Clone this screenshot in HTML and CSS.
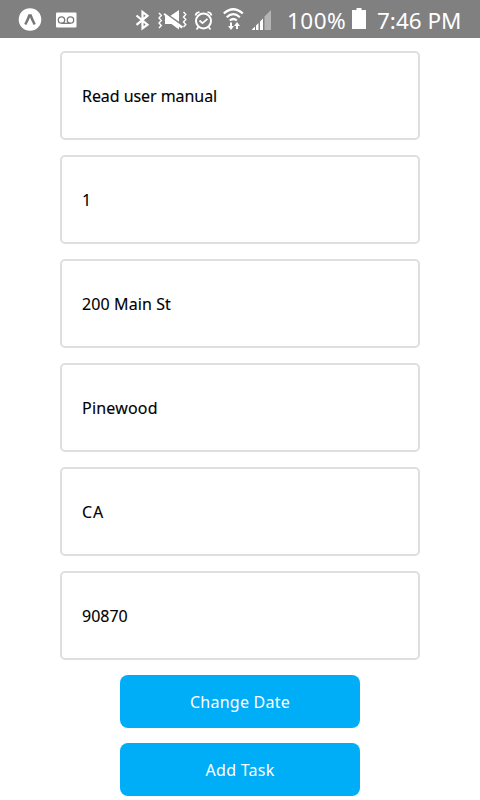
FILE: index.html
```html
<!DOCTYPE html>
<html lang="en">
<head>
<meta charset="utf-8">
<title>Add Task</title>
<link rel="stylesheet" href="styles.css">
</head>
<body>
<header class="status">
  <svg class="status-icons" width="280" height="38" viewBox="0 0 280 38" fill="none" stroke="#fff" aria-hidden="true">
    <g>
      <circle cx="30" cy="19.500" r="11.300" fill="#fff" stroke="none"/>
      <path d="M25.300 24.500Q28 19.500 29.300 15.500h1.400Q32 19.500 34.700 24.500" stroke="#777" stroke-width="2.500"/>
    </g>
    <g>
      <rect x="56" y="12.500" width="20.500" height="15" rx="1" fill="#fff" stroke="none"/>
      <path d="M61.500 23.300h9" stroke="#777" stroke-width="1.300"/>
      <circle cx="61.500" cy="20" r="3.200" stroke="#777" stroke-width="1.300"/>
      <circle cx="70.500" cy="20" r="3.200" stroke="#777" stroke-width="1.300"/>
    </g>
    <path d="M136.500 15.500l11 9.200-5 3.700V12l5 3.700-11 9.200" stroke-width="2.200"/>
    <g fill="#fff" stroke="none">
      <path d="M170.500 15.800l8.500-5.800v11.800z"/>
      <path d="M164.500 13l18.500 13.500-1.300 2L179 26.800v2.700l-7.500-5.500H165v-8.200l-1.500-1.100z"/>
      <path d="M159 13l2.300 2.500-2.300 2.500 2.300 2.500-2.300 2.500 2.300 2.500-2.300 2.500M183.500 12l2.300 2.500-2.300 2.500 2.300 2.500-2.300 2.500 2.300 2.500-2.300 2.500" fill="none" stroke="#fff" stroke-width="1.400"/>
    </g>
    <g>
      <circle cx="203.500" cy="21" r="7.500" stroke-width="2"/>
      <path d="M199.500 20.500l3 2.700 5-4.400" stroke-width="1.700"/>
      <path d="M195.500 15.500q.5-3 4-3.500M207.500 12q3.500.5 4 3.500M198.500 27l-2 2.500M208.500 27l2 2.500" stroke-width="1.700"/>
    </g>
    <g>
      <path d="M223.800 13.500q9.500-8.500 19 0M226.700 17.200q6.600-6 13.200 0M229.800 20.500q3.500-3 7 0" stroke-width="2.200"/>
      <path d="M231 22.500v5M237 29v-4" stroke-width="2"/>
      <path d="M228 26h6L231 30zM234 26h6L237 22z" fill="#fff" stroke="none"/>
    </g>
    <g stroke="none">
      <path d="M264.500 16.500l6.500-6.500v20h-6.500z" fill="#b4b4b4"/>
      <path d="M251.500 30l3.500-3.500V30zM256 25.500l2.500-2.500v7H256zM260 21.500l3-3V30h-3z" fill="#fff"/>
    </g>
  </svg>
  <span class="percent">100%</span>
  <svg class="battery" width="14" height="21" viewBox="0 0 14 21" fill="#fff" aria-hidden="true"><path d="M4.500 0h5v2H14v19H0V2h4.500z"/></svg>
  <span class="clock">7:46 PM</span>
</header>
<main class="form">
  <div class="field"><span class="t-title">Read user manual</span></div>
  <div class="field"><span>1</span></div>
  <div class="field"><span class="t-street">200 Main St</span></div>
  <div class="field"><span class="t-city">Pinewood</span></div>
  <div class="field"><span class="t-state">CA</span></div>
  <div class="field"><span>90870</span></div>
  <button class="btn" type="button">Change Date</button>
  <button class="btn" type="button">Add Task</button>
</main>
</body>
</html>
```
FILE: styles.css
```css
* { box-sizing: border-box; }
body {
  margin: 0;
  height: 800px;
  overflow: hidden;
  background: #fff;
  font-family: "Noto Sans", sans-serif;
}
.status {
  display: flex;
  height: 38px;
  background: #808080;
  color: #fff;
  font-size: 22.5px;
  line-height: 42px;
  white-space: nowrap;
}
.status-icons { flex: none; }
.percent { width: 64px; margin-left: 7px; letter-spacing: 0.5px; }
.battery { flex: none; margin: 8px 0 0 1px; }
.clock { margin-left: 11px; }
.form {
  display: flex;
  flex-direction: column;
  align-items: center;
  gap: 15px;
  padding-top: 13px;
}
.field {
  display: flex;
  align-items: center;
  width: 360px;
  height: 89px;
  padding: 0 20px;
  border: 2px solid #dfdfdf;
  border-radius: 5px;
  color: #000;
  font-size: 16px;
  line-height: 24px;
  -webkit-text-stroke: 0.12px #000;
}
.t-title { letter-spacing: -0.06px; }
.t-street { letter-spacing: 0.1px; }
.t-city { letter-spacing: 0.2px; }
.t-state { letter-spacing: 0.8px; }
.btn {
  width: 240px;
  height: 53px;
  padding: 0;
  border: 0;
  border-radius: 8px;
  background: #00adf7;
  color: #fff;
  font: 16px/24px "Noto Sans", sans-serif;
  letter-spacing: 0.25px;
}
```
